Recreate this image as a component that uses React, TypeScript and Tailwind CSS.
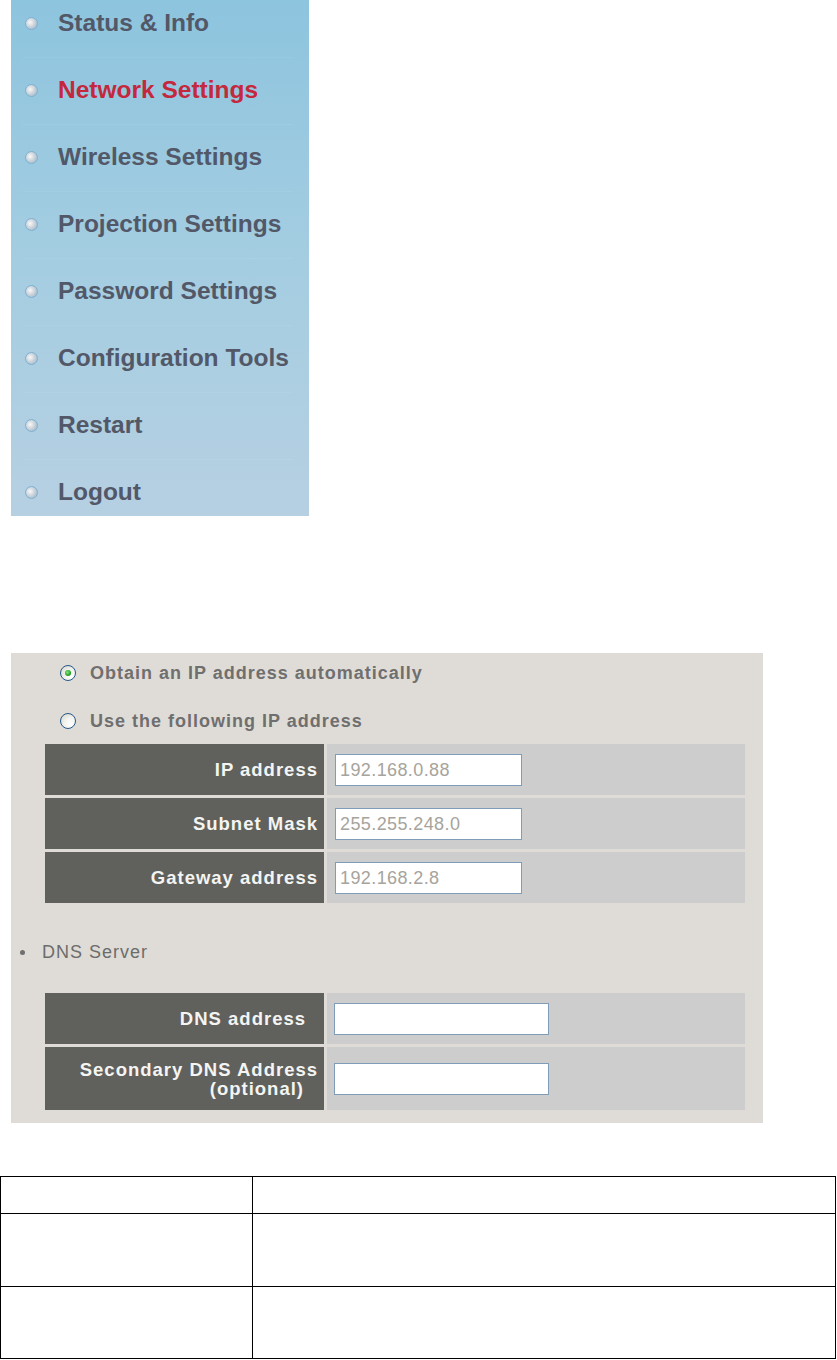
import React from "react";

const menu = [
  { label: "Status & Info", active: false },
  { label: "Network Settings", active: true },
  { label: "Wireless Settings", active: false },
  { label: "Projection Settings", active: false },
  { label: "Password Settings", active: false },
  { label: "Configuration Tools", active: false },
  { label: "Restart", active: false },
  { label: "Logout", active: false },
];

function Radio({ checked }: { checked: boolean }) {
  return (
    <div className="w-[16px] h-[16px] rounded-full border-[1.5px] border-[#24588a] bg-[radial-gradient(circle_at_70%_70%,#ffffff_0%,#f2f2ee_45%,#d2d0c8_100%)] flex items-center justify-center shrink-0">
      {checked && (
        <div className="w-[6px] h-[6px] rounded-full bg-[radial-gradient(circle_at_40%_40%,#86e686_0%,#22a322_60%,#107010_100%)]" />
      )}
    </div>
  );
}

function Input({ value, wide }: { value?: string; wide?: boolean }) {
  return (
    <div
      className={`${wide ? "w-[215px]" : "w-[187px]"} h-[32px] bg-white border border-[#7f9db9] flex items-center pl-[4px] text-[18px] tracking-[0.4px] leading-none text-[#a6a49c]`}
      style={{ fontFamily: '"Liberation Sans", Arial, sans-serif' }}
    >
      {value}
    </div>
  );
}

const labelFont = { fontFamily: '"Liberation Sans", Arial, sans-serif' };

export default function App() {
  return (
    <div className="w-[837px] h-[1360px] bg-white overflow-hidden" style={labelFont}>
      {/* Sidebar */}
      <div className="ml-[11px] w-[298px] h-[516px] overflow-hidden bg-gradient-to-b from-[#8dc4de] via-[#a4cde1] to-[#b6d0e2]">
        {menu.map((m) => (
          <div key={m.label} className="h-[67px] flex flex-col">
            <div className="pt-[9px] pl-[14px] flex items-center h-[37px]">
              <div className="w-[13px] h-[13px] rounded-full border border-[#7fb1d3] bg-[radial-gradient(circle_at_38%_40%,#f8f9fa_0%,#d6dce1_35%,#aebfcc_75%,#6fa6cc_100%)] shrink-0" />
              <span
                className={`ml-[20px] text-[24.5px] leading-[28px] font-bold whitespace-nowrap ${
                  m.active ? "text-[#c4283c]" : "text-[#525868]"
                }`}
              >
                {m.label}
              </span>
            </div>
            <div className="mt-[20px] ml-[12px] w-[270px] h-px bg-white/5" />
          </div>
        ))}
      </div>

      {/* Form panel */}
      <div className="mt-[137px] ml-[11px] w-[752px] h-[470px] bg-[#dfdcd7] pt-[8px]">
        <div className="pl-[49px] h-[24px] flex items-center">
          <Radio checked />
          <span className="ml-[14px] text-[18px] font-bold tracking-[1px] text-[#6f6f6f] whitespace-nowrap">
            Obtain an IP address automatically
          </span>
        </div>
        <div className="pl-[49px] h-[24px] mt-[24px] flex items-center">
          <Radio checked={false} />
          <span className="ml-[14px] text-[18px] font-bold tracking-[1px] text-[#6f6f6f] whitespace-nowrap">
            Use the following IP address
          </span>
        </div>

        <div className="mt-[11px] ml-[34px] w-[700px] grid grid-cols-[279px_1fr] gap-[3px]">
          {[
            ["IP address", "192.168.0.88"],
            ["Subnet Mask", "255.255.248.0"],
            ["Gateway address", "192.168.2.8"],
          ].map(([l, v]) => (
            <React.Fragment key={l}>
              <div className="h-[51px] bg-[#60615d] flex items-center justify-end pr-[6px] text-[18.5px] font-bold tracking-[1px] text-[#f4f4f2]">
                {l}
              </div>
              <div className="h-[51px] bg-[#cdcdcd] flex items-center pl-[8px]">
                <Input value={v} />
              </div>
            </React.Fragment>
          ))}
        </div>

        <div className="mt-[37px] h-[24px] flex items-center pl-[9px]">
          <div className="w-[5px] h-[5px] rounded-full bg-[#6f6f6f]" />
          <span className="ml-[17px] text-[18px] tracking-[1px] text-[#6c6c6c]">DNS Server</span>
        </div>

        <div className="mt-[29px] ml-[34px] w-[700px] grid grid-cols-[279px_1fr] gap-[3px]">
          <div className="h-[51px] bg-[#60615d] flex items-center justify-end pr-[18px] text-[18.5px] font-bold tracking-[1px] text-[#f4f4f2]">
            DNS address
          </div>
          <div className="h-[51px] bg-[#cdcdcd] flex items-center pl-[7px]">
            <Input wide />
          </div>
          <div className="h-[63px] bg-[#60615d] flex flex-col items-end justify-center text-[18.5px] leading-[19px] font-bold tracking-[1px] text-[#f4f4f2]">
            <span className="pr-[6px] whitespace-nowrap">Secondary DNS Address</span>
            <span className="pr-[20px]">(optional)</span>
          </div>
          <div className="h-[63px] bg-[#cdcdcd] flex items-center pl-[7px]">
            <Input wide />
          </div>
        </div>
      </div>

      {/* Bottom table */}
      <div className="mt-[53px] w-[836px] border border-black">
        <div className="grid grid-cols-[252px_1fr] h-[37px] border-b border-black">
          <div className="border-r border-black" />
          <div />
        </div>
        <div className="grid grid-cols-[252px_1fr] h-[73px] border-b border-black">
          <div className="border-r border-black" />
          <div />
        </div>
        <div className="grid grid-cols-[252px_1fr] h-[71px]">
          <div className="border-r border-black" />
          <div />
        </div>
      </div>
    </div>
  );
}
